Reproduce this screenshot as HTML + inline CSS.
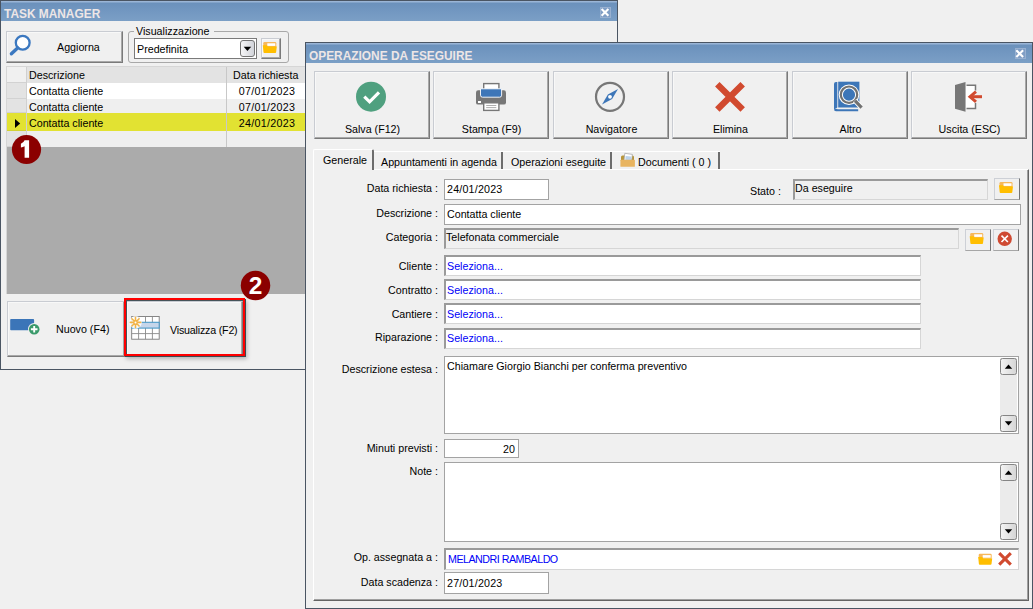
<!DOCTYPE html>
<html><head><meta charset="utf-8">
<style>
*{box-sizing:border-box;margin:0;padding:0}
html,body{width:1033px;height:609px;overflow:hidden;background:#f0f0f0;font-family:"Liberation Sans",sans-serif;font-size:10.7px;color:#000}
.a{position:absolute}
.t{position:absolute;white-space:nowrap;line-height:13px}
.win{position:absolute;background:#f0f0f0;border:1px solid #4a5563}
.title{position:absolute;left:0;right:0;top:0;height:20px;background:linear-gradient(#9ab5d6 0,#9ab5d6 1px,#6b91bc 2px,#7b9fc6 100%);}
.title .tt{position:absolute;left:3px;top:6px;font-weight:bold;font-size:11.9px;color:#ede6e6;line-height:14px;letter-spacing:0}
.close{position:absolute;width:11px;height:11px;background:#809ec5;border:1px solid #98b0d0}
.btn{position:absolute;background:#f0f0f0;border-top:1px solid #c9ccd2;border-left:1px solid #c9ccd2;border-right:1px solid #7a7a7a;border-bottom:1px solid #7a7a7a;box-shadow:inset -1px -1px 0 #a8a8a8, inset 1px 1px 0 #f8f8f8}
.sbtn{position:absolute;background:#f0f0f0;border-top:1px solid #cdd0d6;border-left:1px solid #cdd0d6;border-right:1px solid #747474;border-bottom:1px solid #a6a6a6}
.inp{position:absolute;background:#fff;border:1px solid #a3a3a3}
.sunk{position:absolute;background:#fff;border-top:2px solid #9a9a9a;border-left:2px solid #9a9a9a;border-right:1px solid #d6d6d6;border-bottom:1px solid #d6d6d6}
.lbl{position:absolute;white-space:nowrap;text-align:right;line-height:13px}
.blue{color:#0000f8}
</style></head><body>

<!-- ============ TASK MANAGER WINDOW ============ -->
<div class="win" style="left:0;top:0;width:618px;height:370px">
  <div class="title"><div class="tt">TASK MANAGER</div>
    <div class="close" style="left:599px;top:6px"></div>
  </div>
</div>

<!-- Aggiorna button -->
<div class="btn" style="left:6px;top:31px;width:117px;height:32px"></div>
<div class="t" style="left:57px;top:41px">Aggiorna</div>

<!-- group box -->
<div class="a" style="left:128px;top:31px;width:161px;height:32px;border:1px solid #a8a8a8;border-radius:3px"></div>
<div class="t" style="left:134px;top:25px;background:#f0f0f0;padding:0 5px 0 2px">Visualizzazione</div>
<div class="a" style="left:134px;top:38px;width:123px;height:21px;background:#fff;border:1px solid #7a7a7a"></div>
<div class="t" style="left:137px;top:43px">Predefinita</div>
<div class="a" style="left:240px;top:40px;width:15px;height:17px;border:1px solid #747474;border-radius:3px;background:linear-gradient(to right,#f6f6f7,#d2d4da)"></div>
<div class="btn" style="left:261px;top:38px;width:20px;height:21px"></div>

<!-- grid -->
<div class="a" style="left:6px;top:66px;width:300px;height:228px;background:#ababab;border-left:1px solid #d6d6d6;border-top:1px solid #d6d6d6"></div>
<div class="a" style="left:7px;top:67px;width:299px;height:16px;background:#e3e3e3"></div>
<div class="a" style="left:7px;top:83px;width:299px;height:16px;background:#fff"></div>
<div class="a" style="left:7px;top:99px;width:299px;height:14px;background:#efefef"></div>
<div class="a" style="left:7px;top:113px;width:299px;height:18px;background:#e2e232"></div>
<div class="a" style="left:7px;top:131px;width:299px;height:16px;background:#efefef"></div>
<div class="a" style="left:7px;top:67px;width:19px;height:16px;background:#f0f0f0;border-bottom:1px solid #d2d2d2"></div>
<div class="a" style="left:7px;top:83px;width:19px;height:16px;background:#e3e3e3;border-bottom:1px solid #d2d2d2"></div>
<div class="a" style="left:7px;top:99px;width:19px;height:14px;background:#e3e3e3;border-bottom:1px solid #d2d2d2"></div>
<div class="a" style="left:7px;top:113px;width:19px;height:18px;background:#e2e232;border-bottom:1px solid #d2d232"></div>
<div class="a" style="left:7px;top:131px;width:19px;height:16px;background:#e3e3e3;border-bottom:1px solid #d2d2d2"></div>
<div class="a" style="left:26px;top:67px;width:1px;height:80px;background:#d0d0d0"></div>
<div class="a" style="left:226px;top:67px;width:1px;height:80px;background:#c8c8c8"></div>
<div class="t" style="left:29px;top:69px">Descrizione</div>
<div class="t" style="left:233px;top:69px">Data richiesta</div>
<div class="t" style="left:29px;top:85px">Contatta cliente</div>
<div class="t" style="left:29px;top:101px">Contatta cliente</div>
<div class="t" style="left:29px;top:117px">Contatta cliente</div>
<div class="t" style="left:227px;width:68.3px;text-align:right;top:85px;letter-spacing:0.3px">07/01/2023</div>
<div class="t" style="left:227px;width:68.3px;text-align:right;top:101px;letter-spacing:0.3px">07/01/2023</div>
<div class="t" style="left:227px;width:68.3px;text-align:right;top:117px;letter-spacing:0.3px">24/01/2023</div>

<!-- bottom buttons -->
<div class="btn" style="left:7px;top:301px;width:118px;height:56px"></div>
<div class="t" style="left:56px;top:323px">Nuovo (F4)</div>
<div class="btn" style="left:126px;top:301px;width:117px;height:55px"></div>
<div class="a" style="left:124px;top:298px;width:121px;height:58px;border:2.6px solid #ff0000;box-shadow:inset 1px 1px 0 #46545a,1px 1px 0 #3c4a50,2px 3px 4px rgba(0,0,0,0.25)"></div>
<div class="t" style="left:170px;top:324px;letter-spacing:-0.2px">Visualizza (F2)</div>

<!-- ============ OPERAZIONE WINDOW ============ -->
<div class="win" style="left:305px;top:42px;width:728px;height:567px">
  <div class="title"><div class="tt">OPERAZIONE DA ESEGUIRE</div>
    <div class="close" style="left:709px;top:5px"></div>
  </div>
</div>


<!-- toolbar buttons -->
<div class="btn" style="left:314px;top:71px;width:116px;height:68px"></div>
<div class="btn" style="left:433px;top:71px;width:116px;height:68px"></div>
<div class="btn" style="left:553px;top:71px;width:116px;height:68px"></div>
<div class="btn" style="left:672px;top:71px;width:116px;height:68px"></div>
<div class="btn" style="left:792px;top:71px;width:116px;height:68px"></div>
<div class="btn" style="left:911px;top:71px;width:116px;height:68px"></div>
<div class="t" style="left:314px;width:117px;text-align:center;top:123px">Salva (F12)</div>
<div class="t" style="left:433px;width:117px;text-align:center;top:123px">Stampa (F9)</div>
<div class="t" style="left:553px;width:117px;text-align:center;top:123px">Navigatore</div>
<div class="t" style="left:672px;width:117px;text-align:center;top:123px">Elimina</div>
<div class="t" style="left:792px;width:117px;text-align:center;top:123px">Altro</div>
<div class="t" style="left:911px;width:117px;text-align:center;top:123px">Uscita (ESC)</div>

<!-- tabs -->
<div class="a" style="left:313px;top:169px;width:716px;height:432px;border-top:1px solid #fff;border-left:1px solid #fff;border-right:1px solid #646464;border-bottom:1px solid #646464;box-shadow:inset -1px -1px 0 #a0a0a0"></div>
<div class="a" style="left:374px;top:151px;width:346px;height:18px;border-top:1px solid #fff"></div>
<div class="a" style="left:313px;top:149px;width:61px;height:21px;background:#f0f0f0;border-top:1px solid #fff;border-left:1px solid #fff;border-right:2px solid #6d6d6d;border-radius:2px 2px 0 0"></div>
<div class="a" style="left:501px;top:152px;width:2px;height:17px;background:#6d6d6d"></div>
<div class="a" style="left:610px;top:152px;width:2px;height:17px;background:#6d6d6d"></div>
<div class="a" style="left:718px;top:152px;width:2px;height:17px;background:#6d6d6d"></div>
<div class="t" style="left:323px;top:154px">Generale</div>
<div class="t" style="left:381px;top:156px">Appuntamenti in agenda</div>
<div class="t" style="left:511px;top:156px">Operazioni eseguite</div>
<div class="t" style="left:638px;top:156px">Documenti ( 0 )</div>

<!-- labels -->
<div class="lbl" style="right:595px;top:182px">Data richiesta :</div>
<div class="lbl" style="right:595px;top:207px">Descrizione :</div>
<div class="lbl" style="right:595px;top:231px">Categoria :</div>
<div class="lbl" style="right:595px;top:260px">Cliente :</div>
<div class="lbl" style="right:595px;top:284px">Contratto :</div>
<div class="lbl" style="right:595px;top:308px">Cantiere :</div>
<div class="lbl" style="right:595px;top:331px">Riparazione :</div>
<div class="lbl" style="right:595px;top:363px">Descrizione estesa :</div>
<div class="lbl" style="right:595px;top:442px">Minuti previsti :</div>
<div class="lbl" style="right:595px;top:465px">Note :</div>
<div class="lbl" style="right:595px;top:551px">Op. assegnata a :</div>
<div class="lbl" style="right:595px;top:576px">Data scadenza :</div>
<div class="t" style="left:750px;top:185px">Stato :</div>

<!-- inputs -->
<div class="inp" style="left:444px;top:179px;width:105px;height:21px"></div>
<div class="t" style="left:447px;top:183px;letter-spacing:0.2px">24/01/2023</div>
<div class="a" style="left:793px;top:179px;width:195px;height:21px;background:#f0f0f0;border-top:2px solid #9a9a9a;border-left:2px solid #9a9a9a;border-right:1px solid #d6d6d6;border-bottom:1px solid #d6d6d6"></div>
<div class="t" style="left:795px;top:182px">Da eseguire</div>
<div class="sbtn" style="left:994px;top:178px;width:26px;height:22px"></div>
<div class="inp" style="left:444px;top:204px;width:577px;height:21px"></div>
<div class="t" style="left:447px;top:208px">Contatta cliente</div>
<div class="a" style="left:444px;top:228px;width:515px;height:21px;background:#f0f0f0;border-top:2px solid #9a9a9a;border-left:2px solid #9a9a9a;border-right:1px solid #d6d6d6;border-bottom:1px solid #d6d6d6"></div>
<div class="t" style="left:446px;top:231px">Telefonata commerciale</div>
<div class="sbtn" style="left:965px;top:229px;width:26px;height:22px"></div>
<div class="sbtn" style="left:993px;top:229px;width:26px;height:22px"></div>
<div class="sunk" style="left:444px;top:255px;width:477px;height:21px"></div>
<div class="t blue" style="left:447px;top:260px">Seleziona...</div>
<div class="sunk" style="left:444px;top:279px;width:477px;height:21px"></div>
<div class="t blue" style="left:447px;top:284px">Seleziona...</div>
<div class="sunk" style="left:444px;top:303px;width:477px;height:21px"></div>
<div class="t blue" style="left:447px;top:308px">Seleziona...</div>
<div class="sunk" style="left:444px;top:328px;width:477px;height:21px"></div>
<div class="t blue" style="left:447px;top:332px">Seleziona...</div>

<div class="inp" style="left:444px;top:356px;width:575px;height:78px"></div>
<div class="t" style="left:447px;top:360px">Chiamare Giorgio Bianchi per conferma preventivo</div>
<div class="inp" style="left:444px;top:439px;width:75px;height:19px"></div>
<div class="t" style="left:444px;width:71px;text-align:right;top:443px">20</div>
<div class="inp" style="left:444px;top:462px;width:575px;height:80px"></div>
<div class="sunk" style="left:444px;top:548px;width:575px;height:22px"></div>
<div class="t blue" style="left:448px;top:553px;letter-spacing:-0.5px">MELANDRI RAMBALDO</div>
<div class="inp" style="left:444px;top:572px;width:105px;height:22px"></div>
<div class="t" style="left:447px;top:577px;letter-spacing:0.2px">27/01/2023</div>


<svg class="a" style="left:0;top:0" width="1033" height="609" viewBox="0 0 1033 609">
<defs>
<g id="fold">
 <path d="M0.5 1.2 Q0.5 0 1.7 0 L12.3 0 Q13.5 0 13.5 1.2 L13.5 5 L0.5 5 Z" fill="#f7b85a"/>
 <rect x="4.5" y="1.3" width="8" height="2.6" fill="#fff"/>
 <path d="M0 3.2 L4 3.2 L5 4.6 L14 4.6 L13.3 10.3 Q13.2 11 12.5 11 L1.5 11 Q0.8 11 0.7 10.3 Z" fill="#ffbe00"/>
</g>
</defs>

<!-- close X -->
<path d="M601.6 9 L608.4 15.8 M608.4 9 L601.6 15.8" stroke="#fff" stroke-width="2.1"/>
<path d="M1016.3 50.3 L1023.1 57.1 M1023.1 50.3 L1016.3 57.1" stroke="#fff" stroke-width="2.1"/>
<!-- Aggiorna magnifier -->
<circle cx="22.7" cy="42.8" r="6.9" fill="#fff" stroke="#3b78c0" stroke-width="2.3"/>
<line x1="17.6" y1="47.9" x2="11.4" y2="53.8" stroke="#3b78c0" stroke-width="3.4" stroke-linecap="round"/>

<!-- combo triangle -->
<path d="M243.7 46.8 L251.2 46.8 L247.45 50.9 Z" fill="#000"/>
<use href="#fold" x="262.8" y="42"/>

<!-- row indicator -->
<path d="M15 119 L20.2 123.5 L15 128 Z" fill="#000"/>

<!-- badge 1 -->
<circle cx="26.5" cy="149.5" r="14.6" fill="#8b0000"/>
<path d="M24.6 140.2 L29.1 140.2 L29.1 157.8 L24.6 157.8 L24.6 146.2 Q22.9 147.2 20.9 147.6 L20.9 143.7 Q23.6 142.6 24.6 140.2 Z" fill="#fff"/>
<!-- badge 2 -->
<circle cx="255.5" cy="285.5" r="14.75" fill="#8b0000"/>
<text x="255.5" y="293.7" text-anchor="middle" style="font-family:'Liberation Sans',sans-serif;font-weight:bold;font-size:24.5px" fill="#fff">2</text>

<!-- Nuovo icon -->
<rect x="10.2" y="319.1" width="23.9" height="11.1" rx="0.8" fill="#3b75b8"/>
<circle cx="34.2" cy="329.2" r="6.2" fill="#f0f0f0"/>
<circle cx="34.2" cy="329.2" r="5.3" fill="#3a9a6a"/>
<path d="M34.2 325.9 V332.5 M30.9 329.2 H37.5" stroke="#fff" stroke-width="1.9"/>

<!-- Visualizza icon -->
<rect x="131.7" y="316.5" width="27.5" height="22.7" fill="#fff" stroke="#7a7a7a" stroke-width="0.9"/>
<path d="M138.6 316.5 V339.2 M145.5 316.5 V339.2 M152.4 316.5 V339.2 M131.7 333.6 H159.2" stroke="#8a8a8a" stroke-width="0.9"/>
<rect x="131.7" y="322.3" width="27.5" height="5.8" fill="#c6d6ea" stroke="#4a9ac8" stroke-width="1.1"/>
<circle cx="135.5" cy="322.4" r="6.3" fill="#fff" opacity="0.85"/>
<path d="M135.5 317.2 V327.6 M130.3 322.4 H140.7 M131.9 318.8 L139.1 326 M131.9 326 L139.1 318.8" stroke="#f2b448" stroke-width="1.6" stroke-linecap="round"/>
<circle cx="135.5" cy="322.4" r="1" fill="#fff"/>

<!-- Salva check -->
<circle cx="371" cy="96.7" r="15" fill="#4fa07f"/>
<path d="M364.3 96.6 L369.6 101.8 L379 92.4" fill="none" stroke="#fff" stroke-width="3.2"/>

<!-- Stampa printer -->
<rect x="483.7" y="83.6" width="15.2" height="7" fill="#fff" stroke="#777" stroke-width="1.4"/>
<rect x="476" y="90.2" width="30" height="14.4" rx="2.2" fill="#777"/>
<path d="M480.5 88.8 H501.6 V95.2 Q501.6 97.2 499.6 97.2 H482.5 Q480.5 97.2 480.5 95.2 Z" fill="#3d76b8" stroke="#fff" stroke-width="0.9"/>
<rect x="478" y="101" width="3" height="2" fill="#fff"/>
<rect x="483.7" y="102.8" width="15.2" height="7.6" fill="#fff" stroke="#777" stroke-width="1.4"/>
<path d="M486.2 105.5 H496.3 M486.2 107.6 H496.3" stroke="#999" stroke-width="0.8"/>

<!-- Navigatore compass -->
<circle cx="610" cy="96.8" r="14" fill="none" stroke="#777" stroke-width="2.2"/>
<path d="M602 104.5 L607.9 94.6 L618 89 L612.1 98.9 Z" fill="#3d76b8"/>
<circle cx="610" cy="96.8" r="1.9" fill="#fff"/>

<!-- Elimina X -->
<path d="M717.3 84.2 L742.7 109.6 M742.7 84.2 L717.3 109.6" stroke="#d14a2f" stroke-width="6.3"/>

<!-- Altro book -->
<path d="M834 84 Q834 82 836 82 L837.3 82 L837.3 107.6 L834 109.5 Z" fill="#3d76b8"/>
<rect x="838.2" y="81.7" width="21.2" height="25.8" fill="#3d76b8"/>
<path d="M834 109.5 Q834 111.2 836 111.2 L858.2 111.2 L858.2 109.2 L838 109.2 Q836 109.2 836 108.5 Z" fill="#3d76b8"/>
<circle cx="849" cy="94.7" r="8.2" fill="none" stroke="#fff" stroke-width="4.2"/>
<circle cx="849" cy="94.7" r="8.2" fill="none" stroke="#717171" stroke-width="2.2"/>
<line x1="854.8" y1="100.5" x2="860.8" y2="106.8" stroke="#fff" stroke-width="5"/>
<line x1="855" y1="100.7" x2="861.6" y2="107.6" stroke="#717171" stroke-width="3.2"/>

<!-- Uscita exit -->
<rect x="966" y="85.5" width="9.5" height="23" fill="#fff"/>
<path d="M966.5 85.3 H975.5 V90.5 M975.5 103 V108.5 H966.5" fill="none" stroke="#777" stroke-width="1.5"/>
<path d="M955 85 L965.5 81.9 L965.5 111.8 L955 108.8 Z" fill="#777"/>
<path d="M970.5 96.7 H982" stroke="#d14a2f" stroke-width="3"/>
<path d="M976 91.6 L970 96.7 L976 101.8" fill="none" stroke="#d14a2f" stroke-width="3"/>

<!-- Documenti tab folder -->
<path d="M621 157 Q621 155.5 622.5 155.5 L632.5 155.5 Q634 155.5 634 157 L634 160.5 L621 160.5 Z" fill="#b8963a"/>
<path d="M624.8 153.3 L632.4 154.4 L631.6 160.5 L624 160.5 Z" fill="#fff" stroke="#a0a0a0" stroke-width="0.7"/>
<path d="M625.6 156 L631.3 156.6 L630.9 160.5 L625.3 160.5 Z" fill="#bcd3ea"/>
<rect x="620.4" y="159.7" width="14.5" height="7.1" rx="0.6" fill="#e8b460"/>

<!-- Stato folder -->
<use href="#fold" x="999" y="182"/>
<!-- Categoria folder & X -->
<use href="#fold" x="969.7" y="233"/>
<circle cx="1004.7" cy="238.8" r="7.2" fill="#cf4a32"/>
<path d="M1001.5 235.6 L1007.9 242 M1007.9 235.6 L1001.5 242" stroke="#fff" stroke-width="1.6"/>

<!-- Op assegnata icons -->
<use href="#fold" x="978.2" y="553.8"/>
<path d="M999.2 553.2 L1010.8 564.6 M1010.8 553.2 L999.2 564.6" stroke="#d14a2f" stroke-width="3.1"/>

<!-- scrollbars -->
<g id="sb1">
<rect x="1000" y="358" width="17" height="74" fill="#ebebeb"/>
<rect x="1000.5" y="358.5" width="16" height="16" rx="2" fill="url(#sg)" stroke="#858585"/>
<rect x="1000.5" y="415.5" width="16" height="16" rx="2" fill="url(#sg)" stroke="#858585"/>
<path d="M1004.8 368.8 H1012.2 L1008.5 364.6 Z" fill="#000"/>
<path d="M1004.8 421.2 H1012.2 L1008.5 425.4 Z" fill="#000"/>
</g>
<rect x="1000" y="464" width="17" height="76" fill="#ebebeb"/>
<rect x="1000.5" y="464.5" width="16" height="16" rx="2" fill="url(#sg)" stroke="#858585"/>
<rect x="1000.5" y="523.5" width="16" height="16" rx="2" fill="url(#sg)" stroke="#858585"/>
<path d="M1004.8 474.8 H1012.2 L1008.5 470.6 Z" fill="#000"/>
<path d="M1004.8 529.2 H1012.2 L1008.5 533.4 Z" fill="#000"/>
<defs><linearGradient id="sg" x1="0" x2="1" y1="0" y2="0"><stop offset="0" stop-color="#f4f4f4"/><stop offset="1" stop-color="#d5d5d5"/></linearGradient></defs>
</svg>

</body></html>
